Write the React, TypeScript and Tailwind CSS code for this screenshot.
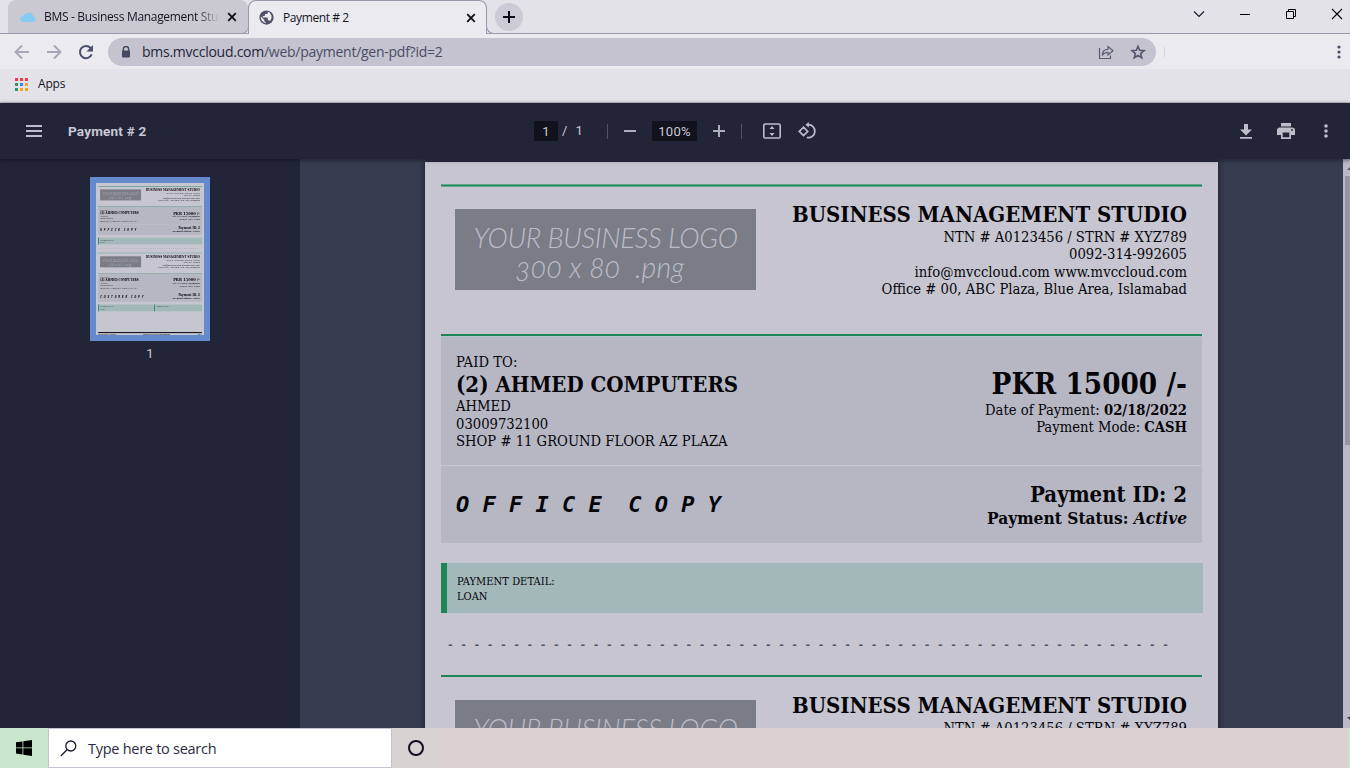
import type { ReactNode } from "react";

const serif = "font-['DejaVu_Serif_Condensed','DejaVu_Serif',serif] [font-stretch:condensed]";

function Business({ soft }: { soft: boolean }) {
  return (
    <div className="flex h-[150px] flex-col">
      {soft ? (
        <div className="h-[3px] shrink-0 border-y border-[#64a78d] bg-[#1d8558]" />
      ) : (
        <div className="mb-[1px] h-[2px] shrink-0 bg-[#1d8558]" />
      )}
      <div className="flex flex-1 justify-between pr-[15px] pl-[14px]">
        <div className="mt-[22px] h-[81px] w-[301px] bg-[#7a7c86] pt-[14px] text-center font-['Lato',sans-serif] text-[27.5px] leading-[30px] font-light text-[#bcbcc8] italic">
          <div className="tracking-[-0.35px] whitespace-nowrap">YOUR BUSINESS LOGO</div>
          <div className="mt-[-1px] pr-[11px] text-[28.5px] tracking-[0.15px] whitespace-pre [font-feature-settings:'onum']">300 x 80  .png</div>
        </div>
        <div className="mt-[14px] text-right text-[14.67px] leading-[17.4px] whitespace-nowrap">
          <div className="h-[27px] text-[22px] leading-[27px] font-bold">BUSINESS MANAGEMENT STUDIO</div>
          <div>NTN # A0123456 / STRN # XYZ789</div>
          <div>0092-314-992605</div>
          <div className="tracking-[0.05px]">info@mvccloud.com www.mvccloud.com</div>
          <div>Office # 00, ABC Plaza, Blue Area, Islamabad</div>
        </div>
      </div>
    </div>
  );
}

function Voucher({ copy, soft = false, children }: { copy: string; soft?: boolean; children: ReactNode }) {
  return (
    <section className="h-[491px]">
      <Business soft={soft} />
      <div className="h-[3px] border-b border-[#b5c5c7] bg-[#1d8558]" />
      <div className="flex h-[128px] justify-between bg-[#b7b7c3] pr-[15px] pl-[15px] text-[14.67px] leading-[17.4px] whitespace-nowrap">
        <div className="pt-[16px]">
          <div className="tracking-[0.05px]">PAID TO:</div>
          <div className="h-[27px] text-[22px] leading-[28.5px] font-bold">(2) AHMED COMPUTERS</div>
          <div>AHMED</div>
          <div>03009732100</div>
          <div>SHOP # 11 GROUND FLOOR AZ PLAZA</div>
        </div>
        <div className="pt-[30px] text-right">
          <div className="h-[34px] text-[29.33px] leading-[34px] font-bold">PKR 15000 /-</div>
          <div>Date of Payment: <b>02/18/2022</b></div>
          <div className="leading-[18.6px]">Payment Mode: <b>CASH</b></div>
        </div>
      </div>
      <div className="mt-[1px] flex h-[77px] justify-between bg-[#b7b7c3] pr-[15px] pl-[15px] font-bold whitespace-nowrap">
        <div className="pt-[25px] font-['DejaVu_Sans_Mono',monospace] text-[22px] leading-[28px] whitespace-pre italic">{copy}</div>
        <div className="pt-[15px] text-right">
          <div className="text-[22px] leading-[27px]">Payment ID: 2</div>
          <div className="text-[17.2px] leading-[21.5px]">Payment Status: <i>Active</i></div>
        </div>
      </div>
      {children}
    </section>
  );
}

function Note({ title, body, width }: { title: string; body: string; width: string }) {
  return (
    <div className={`h-[50px] border-l-[6px] border-[#1d8558] bg-[#a3b8b9] pt-[11px] pl-[10px] text-[11px] leading-[15px] ${width}`}>
      <div className="tracking-[0.06px]">{title}</div>
      <div>{body}</div>
    </div>
  );
}

function PdfPage() {
  return (
    <div className={`h-[1122px] w-[793px] bg-[#c7c6d0] px-[16px] pt-[22px] text-[#050509] ${serif}`}>
      <Voucher copy="O F F I C E  C O P Y" soft>
        <div className="mt-[20px] mr-[-1px] flex"><Note title="PAYMENT DETAIL:" body="LOAN" width="flex-1" /></div>
        <div className="mt-[24px] ml-[6px] font-['DejaVu_Sans_Mono',monospace] text-[11px] leading-[15px] font-bold whitespace-pre text-[#50516c] [font-stretch:normal]">{"- ".repeat(55)}</div>
      </Voucher>
      <Voucher copy="C U S T O M E R  C O P Y">
        <div className="mt-[20px] mr-[-1px] flex">
          <Note title="PAYMENT DETAIL:" body="LOAN" width="w-[410px]" />
          <Note title="APPROVAL NOTE:" body="" width="flex-1" />
        </div>
      </Voucher>
      <div className="mt-[90px] flex justify-between border-t-[8px] border-[#15151f] text-[11px] font-bold">
        <span>PAYMENT # 2 / OFFICE</span><span>BUSINESS MANAGEMENT STUDIO</span><span>1 of 1</span>
      </div>
    </div>
  );
}

function Close() {
  return <svg className="size-[10px]" viewBox="0 0 10 10"><path d="M1.2 1.2l7.6 7.6M8.8 1.2L1.2 8.8" stroke="#0c0c18" strokeWidth="1.8" /></svg>;
}

function Tabs() {
  return (
    <div className="flex h-[34px] shrink-0 border-b border-[#9b98ab] bg-[#e3e2e8]">
      <div className="ml-[8px] flex h-[33px] w-[240px] items-center rounded-t-lg rounded-br-lg bg-[#cac9d2] pl-[12px]">
        <svg className="h-[16px] w-[16px]" viewBox="0 0 16 16"><path d="M3.300 13a3 3 0 0 1-.2-6A3 3 0 0 1 7 4.600a3.700 3.700 0 0 1 6.200 2.600A3 3 0 0 1 13.500 13z" fill="#86caf5" /></svg>
        <div className="ml-[8px] w-[176px] overflow-hidden bg-[linear-gradient(90deg,#14141f_152px,#cac9d2_176px)] bg-clip-text font-['Open_Sans',sans-serif] text-[12px] leading-[20px] tracking-[-0.32px] whitespace-nowrap text-transparent">BMS - Business Management Studio</div>
        <div className="ml-[7px]"><Close /></div>
      </div>
      <div className="relative flex h-[34px] w-[239px] items-center rounded-t-lg border-x border-t border-[#9b98ab] bg-[#ebeaef] pl-[10px]">
        <div className="absolute bottom-0 left-[-8px] h-[8px] w-[8px] rounded-br-lg border-r border-b border-[#9b98ab]" />
        <div className="absolute right-[-8px] bottom-0 h-[8px] w-[8px] rounded-bl-lg border-b border-l border-[#9b98ab] bg-[#e3e2e8]" />
        <svg className="size-[15px]" viewBox="0 0 16 16"><circle cx="8" cy="8" r="7.600" fill="#4e5169" /><path d="M9.400 1.700v1.100c0 .9-.8 1.500-1.600 1.500H6.400v1.300c0 .5-.4.8-.9.8H4.100v1.500h4.400c.5 0 .9.4.9.9v2h.8c.7 0 1.300.4 1.500 1A6.200 6.200 0 0 0 9.400 1.700zM7.200 14.100v-1.200c-.8 0-1.500-.7-1.500-1.500v-.7L2 6.900a6.300 6.300 0 0 0 5.200 7.200z" fill="#ebeaef" /></svg>
        <span className="ml-[9px] flex-1 font-['Open_Sans',sans-serif] text-[12px] tracking-[-0.4px] text-[#14141f]">Payment # 2</span>
        <div className="mr-[10px]"><Close /></div>
      </div>
      <div className="mt-[3px] ml-[8px] flex size-[28px] items-center justify-center rounded-full bg-[#cccbd5]">
        <svg className="size-[12px]" viewBox="0 0 12 12"><path d="M6 0v12M0 6h12" stroke="#0b0b14" strokeWidth="2" /></svg>
      </div>
      <div className="flex flex-1 items-start justify-end gap-[34px] pt-[8px] pr-[7px]">
        <svg className="size-[12px]" viewBox="0 0 12 12"><path d="M1 3.500l5 5 5-5" fill="none" stroke="#17172a" strokeWidth="1.100" /></svg>
        <svg className="size-[12px]" viewBox="0 0 12 12"><path d="M1 6.500h10" stroke="#000" /></svg>
        <svg className="size-[12px]" viewBox="0 0 12 12"><path d="M1.500 3.500h7v7h-7zM3.500 3V1.500h7v7H9" fill="none" stroke="#000" /></svg>
        <svg className="size-[12px]" viewBox="0 0 12 12"><path d="M1 1l10 10M11 1L1 11" stroke="#000" strokeWidth="1.100" /></svg>
      </div>
    </div>
  );
}

function Toolbar() {
  return (
    <div className="flex h-[35px] shrink-0 items-center bg-[#ebeaef] pl-[14px]">
      <svg className="size-[16px]" viewBox="0 0 16 16"><path d="M15 8H2M8 1.500L1.500 8 8 14.500" fill="none" stroke="#a7a6b7" strokeWidth="1.800" /></svg>
      <svg className="ml-[16px] size-[16px]" viewBox="0 0 16 16"><path d="M1 8h13M8 1.500L14.500 8 8 14.500" fill="none" stroke="#a7a6b7" strokeWidth="1.800" /></svg>
      <svg className="ml-[16px] size-[16px]" viewBox="0 0 16 16"><path d="M13.700 10.400A6.100 6.100 0 1 1 12.600 4L14 5.500" fill="none" stroke="#4b4e68" strokeWidth="2" /><path d="M15 1v6.500H8.500z" fill="#4b4e68" /></svg>
      <div className="ml-[14px] flex h-[28px] w-[1048px] items-center rounded-full bg-[#c4c3cf] pl-[13px] text-[#4b4d66]">
        <svg className="h-[12px] w-[10px]" viewBox="0 0 10 12"><path d="M2.300 5V3.200a2.700 2.700 0 0 1 5.400 0V5" fill="none" stroke="#464861" strokeWidth="1.400" /><rect x="1" y="4.500" width="8" height="7" rx="1" fill="#464861" /></svg>
        <span className="ml-[11px] flex-1 font-['Open_Sans',sans-serif] text-[14px] leading-[20px] tracking-[-0.26px]"><span className="text-[#25263c]">bms.mvccloud.com</span>/web/payment/gen-pdf?id=2</span>
        <svg className="h-[16px] w-[16px]" viewBox="0 0 16 16"><path d="M1.500 4v10.500h11V11.500M4.500 10.800c0-3.500 2-5.500 5.500-5.500V2.500L15 6.800 10 11V8.300c-2.500 0-4.200.8-5.500 2.500z" fill="none" stroke="#5b5d76" strokeWidth="1.200" /></svg>
        <svg className="mr-[10px] ml-[16px] size-[16px]" viewBox="0 0 24 24"><path d="M12 3.500l2.500 6 6.500.5-5 4.300 1.600 6.300L12 17.200l-5.600 3.400L8 14.300 3 10l6.500-.5z" fill="none" stroke="#55576f" strokeWidth="2.400" /></svg>
      </div>
      <div className="ml-[8px] h-[10px] w-px bg-[#d5d4e0]" />
      <svg className="mr-[9px] ml-auto h-[14px] w-[4px]" viewBox="0 0 4 14"><g fill="#4c4e69"><circle cx="2" cy="2" r="1.600" /><circle cx="2" cy="7" r="1.600" /><circle cx="2" cy="12" r="1.600" /></g></svg>
    </div>
  );
}

function PdfBar() {
  return (
    <div className="relative z-10 flex h-[56px] shrink-0 items-center bg-[#222438] pl-[26px] font-['Roboto',sans-serif] text-[#c9c8d5] shadow-[0_1px_4px_rgba(12,12,26,0.6)]">
      <div className="flex w-[16px] flex-col gap-[3px]"><i className="h-[2px] bg-[#bdbcca]" /><i className="h-[2px] bg-[#bdbcca]" /><i className="h-[2px] bg-[#bdbcca]" /></div>
      <div className="ml-[26px] w-[466px] text-[13.5px] leading-[20px] font-bold tracking-[0.2px]">Payment # 2</div>
      <div className="h-[20px] w-[24px] bg-[#11121c] text-center text-[13px] leading-[21px]">1</div>
      <div className="flex w-[49px] gap-[8px] pl-[4px] text-[13px] leading-[20px]"><span>/</span><span>1</span></div>
      <div className="h-[15px] w-px bg-[#50526a]" />
      <div className="ml-[16px] h-[2px] w-[12px] bg-[#aeadbc]" />
      <div className="ml-[16px] h-[20px] w-[45px] bg-[#11121c] text-center text-[13px] leading-[21px] tracking-[0.3px]">100%</div>
      <svg className="ml-[16px] size-[12px]" viewBox="0 0 12 12"><path d="M6 0v12M0 6h12" stroke="#aeadbc" strokeWidth="2" /></svg>
      <div className="ml-[16px] h-[15px] w-px bg-[#50526a]" />
      <svg className="ml-[21px] h-[16px] w-[18px]" viewBox="0 0 18 16"><rect x=".8" y="1" width="16.400" height="14" rx="1.300" fill="none" stroke="#bdbcca" strokeWidth="1.600" /><path d="M9 3l2.500 3h-5zM9 13l2.500-3h-5z" fill="#bdbcca" /></svg>
      <svg className="ml-[16px] h-[18px] w-[20px]" viewBox="0 0 20 18"><path d="M6.500 5.200l4.200 4.200-4.200 4.200-4.200-4.200zM11 2.700a6.500 6.500 0 1 1-1.200 12.800" fill="none" stroke="#bdbcca" strokeWidth="1.700" /><path d="M11.800 0v5.700L8.500 2.800z" fill="#bdbcca" /></svg>
      <svg className="ml-auto h-[15px] w-[12px]" viewBox="0 0 12 15"><path d="M4 0h4v5.500h4l-6 6-6-6h4zM0 13h12v1.700H0z" fill="#bdbcca" /></svg>
      <svg className="ml-[25px] h-[16px] w-[18px]" viewBox="0 0 18 16"><path d="M4 0h10v3.500H4zM3 4.500h12a3 3 0 0 1 3 3V12h-4v4H4v-4H0V7.500a3 3 0 0 1 3-3zM5.700 9.500v4.800h6.600V9.500z" fill="#bdbcca" fillRule="evenodd" /><circle cx="15" cy="7" r=".9" fill="#222438" /></svg>
      <svg className="mr-[22px] ml-[29px] h-[14px] w-[4px]" viewBox="0 0 4 14"><g fill="#bdbcca"><circle cx="2" cy="2" r="1.800" /><circle cx="2" cy="7" r="1.800" /><circle cx="2" cy="12" r="1.800" /></g></svg>
    </div>
  );
}

export default function App() {
  return (
    <div className="flex h-[768px] w-[1350px] flex-col overflow-hidden">
      <Tabs />
      <Toolbar />
      <div className="flex h-[34px] shrink-0 items-center border-b border-[#c6c5d0] bg-[#e3e2e8] pl-[15px]">
        <div className="mt-[-3px] grid grid-cols-3 gap-[2px]">
          {["bg-[#f23a4a]", "bg-[#f23a4a]", "bg-[#f23a4a]", "bg-[#2e9461]", "bg-[#2d86f0]", "bg-[#f3a51b]", "bg-[#2e9461]", "bg-[#f3a51b]", "bg-[#f3a51b]"].map((c, i) => <i key={i} className={`size-[3px] ${c}`} />)}
        </div>
        <span className="mt-[-3px] ml-[10px] font-['Open_Sans',sans-serif] text-[12px] leading-[20px] tracking-[-0.2px] text-[#14141f]">Apps</span>
      </div>
      <PdfBar />
      <div className="flex h-[569px] shrink-0 bg-[#383c50]">
        <aside className="flex w-[300px] flex-col items-center bg-[#222438] pt-[18px]">
          <div className="h-[164px] w-[120px] border-[6px] border-[#658acb]">
            <div className="h-[152px] w-[108px] overflow-hidden">
              <div className="h-[1122px] w-[793px] origin-top-left scale-[0.1362]"><PdfPage /></div>
            </div>
          </div>
          <div className="mt-[4px] font-['Roboto',sans-serif] text-[13px] leading-[18px] text-[#c9c8d5]">1</div>
        </aside>
        <main className="h-[569px] flex-1 overflow-hidden pt-[3px] pl-[125px]">
          <div className="h-[1122px] w-[793px] shadow-[0_0_5px_1px_rgba(28,25,48,0.8)]"><PdfPage /></div>
        </main>
        <div className="flex w-[7px] flex-col items-end justify-between bg-[#bab9c6]">
          <svg className="mt-[8px] h-[3px] w-[3px]" viewBox="0 0 3 3"><path d="M0 3l3-3v3z" fill="#52536a" /></svg>
          <div className="mt-[6px] mb-auto h-[269px] w-[5px] bg-[#9594a4]" />
          <svg className="mb-[8px] h-[3px] w-[3px]" viewBox="0 0 3 3"><path d="M0 0h3v3z" fill="#30314a" /></svg>
        </div>
      </div>
      <footer className="flex h-[40px] shrink-0 items-center border-r-2 border-[#cce3d0] bg-[#dbd1d1]">
        <div className="flex h-[40px] w-[48px] items-center justify-center bg-[#c9e7cf]">
          <svg className="size-[16px]" viewBox="0 0 16 16"><path d="M0 2.300l6.500-.9v6.100H0zM7.300 1.300L16 0v7.500H7.300zM0 8.300h6.500v6.200L0 13.600zM7.300 8.300H16V16l-8.700-1.300z" /></svg>
        </div>
        <div className="flex h-[40px] w-[344px] items-center border border-[#c4c3d0] bg-white pl-[11px]">
          <svg className="size-[17px]" viewBox="0 0 17 17"><circle cx="10.800" cy="6" r="5" fill="none" stroke="#17182c" strokeWidth="1.300" /><path d="M7 9.800L.8 16" stroke="#17182c" strokeWidth="1.300" /></svg>
          <span className="mt-[1px] ml-[11px] font-['Open_Sans',sans-serif] text-[14.5px] leading-[20px] tracking-[-0.27px] text-[#2a2b42]">Type here to search</span>
        </div>
        <div className="flex h-[40px] w-[48px] items-center justify-center bg-[#d8d3d2]"><div className="size-[16px] rounded-full border-[2.500px] border-[#10111f]" /></div>
      </footer>
    </div>
  );
}
